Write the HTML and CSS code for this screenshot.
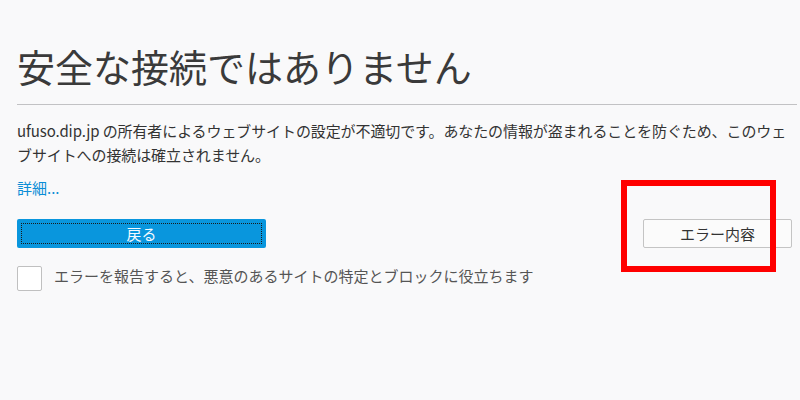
FILE: index.html
```html
<!DOCTYPE html>
<html lang="ja">
<head>
<meta charset="utf-8">
<link rel="stylesheet" href="styles.css">
</head>
<body>
<div class="page">
  <h1 class="title">安全な接続ではありません</h1>
  <hr class="rule">
  <p class="desc">ufuso.dip.jp の所有者によるウェブサイトの設定が不適切です。あなたの情報が盗まれることを防ぐため、このウェブサイトへの接続は確立されません。</p>
  <a class="more" href="#">詳細...</a>
  <div class="actions">
    <button class="btn primary"><span class="focus">戻る</span></button>
    <button class="btn secondary">エラー内容</button>
  </div>
  <label class="report">
    <span class="box"></span>
    <span class="report-text">エラーを報告すると、悪意のあるサイトの特定とブロックに役立ちます</span>
  </label>
</div>
<div class="highlight"></div>
</body>
</html>
```
FILE: styles.css
```css
html, body {
  margin: 0;
  padding: 0;
  background: #f9f9fa;
  width: 800px;
  height: 400px;
  overflow: hidden;
}
body {
  font-family: "Noto Sans CJK JP", "Noto Sans", sans-serif;
  color: #333;
  position: relative;
}
.page {
  padding: 42px 8px 0 17px;
  width: 775px;
}
.title {
  margin: 0;
  font-size: 38px;
  line-height: 48px;
  font-weight: 400;
  color: #3a3a3a;
}
.rule {
  margin: 14px -5px 0 0;
  border: 0;
  border-top: 1px solid #c2c2c4;
  height: 0;
}
.desc {
  margin: 14px 0 0;
  font-size: 15px;
  line-height: 24px;
  width: 780px;
  color: #333;
  letter-spacing: -0.1px;
}
.more {
  display: block;
  margin-top: 9px;
  font-size: 15px;
  line-height: 24px;
  color: #0a8dd6;
  text-decoration: none;
  width: max-content;
}
.actions {
  margin-top: 19px;
  display: flex;
  justify-content: space-between;
  align-items: center;
}
.btn {
  font-family: inherit;
  font-size: 15px;
  height: 29px;
  border-radius: 2px;
  padding: 0;
  margin: 0;
  cursor: pointer;
}
.primary {
  width: 249px;
  background: #0996dd;
  border: 0;
  color: #f4faff;
  padding: 4px;
}
.focus {
  display: flex;
  align-items: center;
  justify-content: center;
  height: 100%;
  border: 1px dotted #1a1a1a;
  box-sizing: border-box;
}
.secondary {
  width: 149px;
  background: #fbfbfb;
  border: 1px solid #c4c4c4;
  color: #333;
}
.report {
  margin-top: 18px;
  display: flex;
  align-items: flex-start;
  gap: 12px;
}
.box {
  width: 23px;
  height: 23px;
  border: 1px solid #c0c0c0;
  border-radius: 2px;
  background: #ffffff;
}
.report-text {
  font-size: 15px;
  line-height: 20px;
  color: #555;
}
.highlight {
  position: absolute;
  left: 621px;
  top: 180px;
  width: 143px;
  height: 80px;
  border: 6px solid #ff0000;
}
```
